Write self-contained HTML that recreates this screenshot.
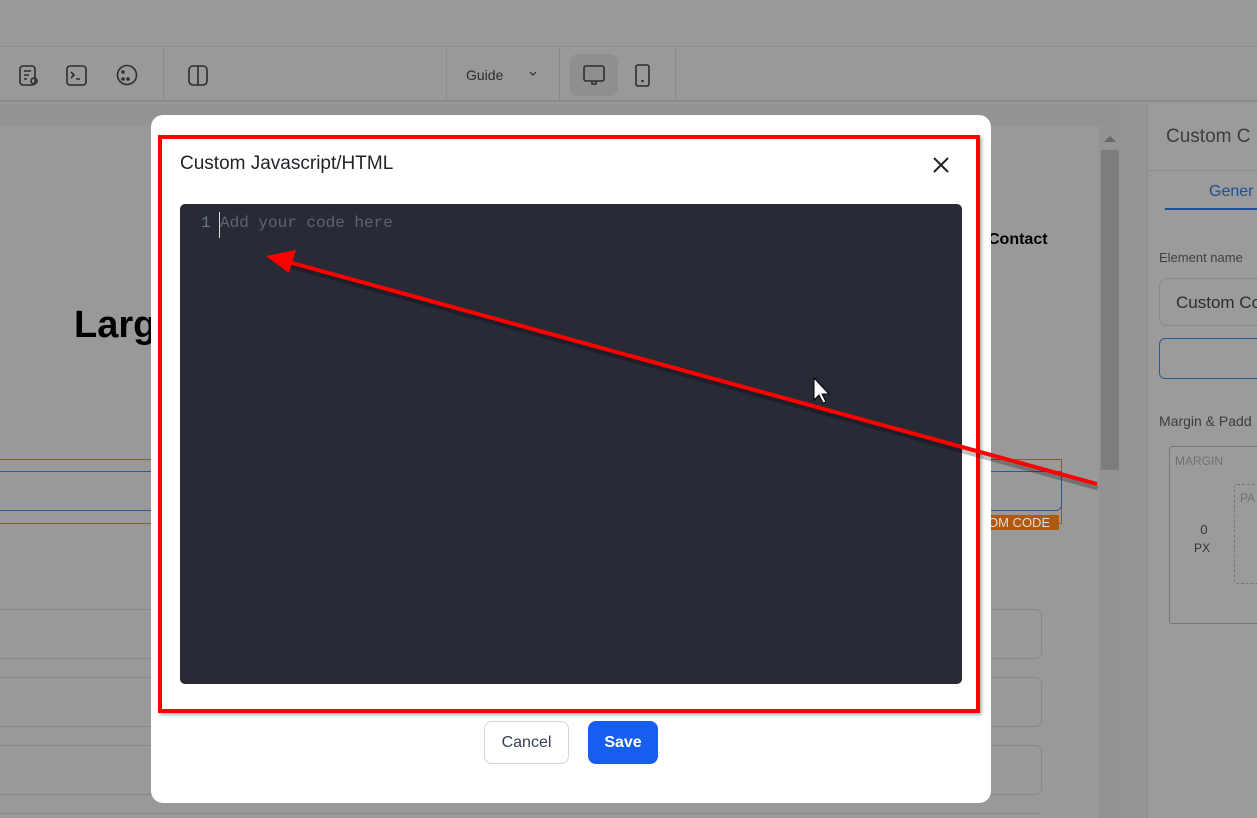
<!DOCTYPE html><html style="width:1257px;height:818px;overflow:hidden"><head><style>
*{margin:0;padding:0;box-sizing:border-box}
body{width:1257px;height:818px;overflow:hidden;background:#9a9a9a;font-family:"Liberation Sans",sans-serif;position:relative}
.a{position:absolute;white-space:nowrap}
</style></head><body>
<div class="a" style="left:0;top:0;width:1257px;height:47px;background:#999;border-bottom:1px solid #8c8c8c"></div>
<div class="a" style="left:0;top:48px;width:1257px;height:54px;background:#999;border-bottom:2px solid #8a8a8a"></div>
<div class="a" style="left:163px;top:48px;width:1px;height:54px;background:#8a8a8a"></div>
<div class="a" style="left:446px;top:48px;width:1px;height:54px;background:#8a8a8a"></div>
<div class="a" style="left:559px;top:48px;width:1px;height:54px;background:#8a8a8a"></div>
<div class="a" style="left:675px;top:48px;width:1px;height:54px;background:#8a8a8a"></div>
<div class="a" style="left:570px;top:54px;width:48px;height:42px;background:#8f8f8f;border-radius:8px"></div>
<svg class="a" style="left:0;top:48px" width="700" height="54" fill="none" stroke="#2a2d33" stroke-width="1.6">
<rect x="20" y="18" width="15" height="19" rx="3"/><path d="M24 23h7M24 27h5M24 31h3"/><circle cx="34" cy="33" r="3"/>
<rect x="67" y="18" width="19" height="19" rx="3"/><path d="M71 24l3 3-3 3M76 31h4"/>
<circle cx="127" cy="27" r="9.5"/><circle cx="123" cy="24" r="1"/><circle cx="128" cy="31" r="1"/><circle cx="123" cy="31" r="1"/>
<rect x="189" y="18" width="18" height="19" rx="4"/><path d="M198 18v19"/>
<path d="M530 24l3 3 3-3" stroke-width="1.2"/>
<rect x="584" y="18" width="20" height="15" rx="2"/><path d="M592 33v3h4v-3"/>
<rect x="636" y="17" width="13" height="21" rx="2"/><circle cx="642.5" cy="33" r=".5"/>
</svg>
<div class="a" style="left:466px;top:67px;font-size:14px;color:#2a2d33">Guide</div>
<div class="a" style="left:0;top:125px;width:1095px;height:693px;background:#999"></div>
<div class="a" style="left:0;top:104px;width:1145px;height:22px;background:#939393"></div>
<div class="a" style="left:1099px;top:126px;width:22px;height:692px;background:#949494"></div>
<div class="a" style="left:1101px;top:150px;width:18px;height:320px;background:#7d7d7d"></div>
<div class="a" style="left:1104px;top:136px;width:0;height:0;border:6px solid transparent;border-bottom:6px solid #666;border-top:0"></div>
<div class="a" style="left:1121px;top:104px;width:26px;height:714px;background:#959595"></div>
<div class="a" style="left:1147px;top:104px;width:110px;height:714px;background:#9b9b9b;border-left:1px solid #8c8c8c"></div>
<div class="a" style="left:1166px;top:126px;font-size:19px;color:#3a3d42">Custom C</div>
<div class="a" style="left:1147px;top:170px;width:110px;height:1px;background:#8c8c8c"></div>
<div class="a" style="left:1209px;top:183px;font-size:16px;color:#1c4f93">Gener</div>
<div class="a" style="left:1165px;top:208px;width:92px;height:2px;background:#1c4f93"></div>
<div class="a" style="left:1159px;top:250px;font-size:13px;color:#3d4046">Element name</div>
<div class="a" style="left:1159px;top:278px;width:110px;height:48px;border:1px solid #8a8a8a;border-radius:8px;padding:14px 16px;font-size:17px;color:#2a2d33">Custom Co</div>
<div class="a" style="left:1159px;top:338px;width:110px;height:41px;border:1px solid #2a5a9a;border-radius:6px"></div>
<div class="a" style="left:1159px;top:413px;font-size:14px;color:#3a3d42">Margin &amp; Padd</div>
<div class="a" style="left:1169px;top:446px;width:100px;height:178px;border:1px solid #777;border-radius:3px"></div>
<div class="a" style="left:1175px;top:454px;font-size:12px;color:#707070">MARGIN</div>
<div class="a" style="left:1234px;top:484px;width:40px;height:100px;border:1px dashed #777;border-radius:3px;font-size:12px;color:#707070;padding:6px 5px">PA</div>
<div class="a" style="left:1194px;top:521px;font-size:13px;color:#333;text-align:center;line-height:18px">&nbsp;0<br><span style="font-size:12px">PX</span></div>
<div class="a" style="left:0;top:459px;width:1062px;height:65px;border:1px solid #8a5a2a;border-left:0"></div>
<div class="a" style="left:0;top:471px;width:1062px;height:40px;border:1px solid #2a5a9a;border-left:0;border-radius:0 0 6px 0"></div>
<div class="a" style="left:984px;top:515px;width:75px;height:15px;background:#b05a10;color:#ddd;font-size:13px;line-height:15px;padding-left:4px">OM CODE</div>
<div class="a" style="left:988px;top:231px;font-size:16px;font-weight:bold;color:#000">Contact</div>
<div class="a" style="left:74px;top:304px;font-size:38px;font-weight:bold;color:#000">Larg</div>
<div class="a" style="left:0;top:609px;width:1042px;height:50px;border:1px solid #878787;border-left:0;border-radius:0 6px 6px 0"></div>
<div class="a" style="left:0;top:677px;width:1042px;height:50px;border:1px solid #878787;border-left:0;border-radius:0 6px 6px 0"></div>
<div class="a" style="left:0;top:745px;width:1042px;height:50px;border:1px solid #878787;border-left:0;border-radius:0 6px 6px 0"></div>
<div class="a" style="left:0;top:813px;width:1042px;height:5px;border-top:1px solid #878787"></div>
<div class="a" style="left:151px;top:115px;width:840px;height:688px;background:#fff;border-radius:12px"></div>
<div class="a" style="left:158px;top:135px;width:822px;height:578px;border:4px solid #f00;box-shadow:2px 2px 3px rgba(0,0,0,.3)"></div>
<div class="a" style="left:180px;top:153px;font-size:19px;color:#1f2328">Custom Javascript/HTML</div>
<svg class="a" style="left:932px;top:156px" width="18" height="18" stroke="#1f2328" stroke-width="2"><path d="M2 2l14 14M16 2L2 16"/></svg>
<div class="a" style="left:180px;top:204px;width:782px;height:480px;background:#282a36;border-radius:5px"></div>
<div class="a" style="left:201px;top:214px;font-family:'Liberation Mono',monospace;font-size:16px;color:#6a7a86">1</div>
<div class="a" style="left:219px;top:212px;width:1px;height:26px;background:#ddd"></div>
<div class="a" style="left:220px;top:214px;font-family:'Liberation Mono',monospace;font-size:16px;color:#5f6470">Add your code here</div>
<div class="a" style="left:484px;top:721px;width:85px;height:43px;border:1px solid #d0d5dd;border-radius:8px;font-size:16px;color:#344054;text-align:center;line-height:41px">Cancel</div>
<div class="a" style="left:588px;top:721px;width:70px;height:43px;background:#155eef;border-radius:8px;font-size:16px;font-weight:bold;color:#fff;text-align:center;line-height:43px">Save</div>
<svg class="a" style="left:0;top:0" width="1257" height="818">
<line x1="1097" y1="485" x2="285" y2="262" stroke="rgba(0,0,0,.25)" stroke-width="5" transform="translate(1,3)"/>
<line x1="1097" y1="484" x2="285" y2="261" stroke="#f00" stroke-width="4"/>
<polygon points="266,256 296,250 289,273" fill="#f00"/>
<path d="M814 378v22l5-5 4 8 3-1-4-8h7z" fill="#fff" stroke="#000" stroke-width="1"/>
</svg>
</body></html>
